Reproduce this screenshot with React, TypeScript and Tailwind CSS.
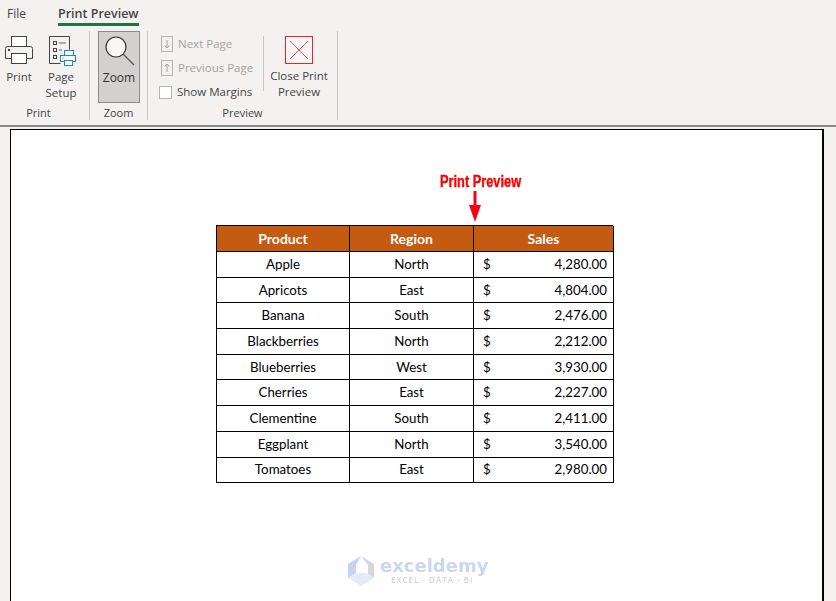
import type { ReactNode } from 'react';

const rows = [
  ['Apple', 'North', '4,280.00'],
  ['Apricots', 'East', '4,804.00'],
  ['Banana', 'South', '2,476.00'],
  ['Blackberries', 'North', '2,212.00'],
  ['Blueberries', 'West', '3,930.00'],
  ['Cherries', 'East', '2,227.00'],
  ['Clementine', 'South', '2,411.00'],
  ['Eggplant', 'North', '3,540.00'],
  ['Tomatoes', 'East', '2,980.00'],
];

function PrintIcon() {
  return (
    <svg width="28" height="28" viewBox="0 0 28 28" fill="none" stroke="#444">
      <rect x="6.5" y="0.5" width="15" height="12" fill="#fff" />
      <path d="M2.5 10.5h23a2 2 0 0 1 2 2v10h-27v-10a2 2 0 0 1 2-2z" fill="#f3f2f1" />
      <rect x="6.5" y="17.5" width="15" height="10" fill="#fff" />
      <rect x="3" y="13" width="2" height="2" fill="#444" stroke="none" />
    </svg>
  );
}

function PageSetupIcon() {
  return (
    <svg width="28" height="30" viewBox="0 0 28 30" fill="none">
      <path d="M.5.5h20v13M.5.5v27h11" stroke="#444" />
      <rect x="4.5" y="5.5" width="3" height="3" stroke="#444" />
      <rect x="4.5" y="12.5" width="3" height="3" stroke="#444" />
      <rect x="4.5" y="19.5" width="3" height="3" stroke="#444" />
      <path d="M10 7h7M10 14h3" stroke="#666" />
      <rect x="15.5" y="14.5" width="9" height="6" fill="#fff" stroke="#1b87c9" />
      <rect x="11.5" y="19.5" width="15" height="6" fill="#fff" stroke="#1b87c9" />
      <rect x="15.5" y="24.5" width="8" height="5" fill="#fff" stroke="#1b87c9" />
      <rect x="13.5" y="21.5" width="1" height="1" fill="#1b87c9" />
    </svg>
  );
}

function ZoomIcon() {
  return (
    <svg width="32" height="32" viewBox="0 0 32 32" fill="none">
      <circle cx="13" cy="12" r="10" fill="#f7f7f6" stroke="#333" strokeWidth="1.2" />
      <path d="M20 19l11 11" stroke="#555" strokeWidth="1.2" />
    </svg>
  );
}

function CloseIcon() {
  return (
    <svg width="28" height="28" viewBox="0 0 28 28" fill="none">
      <rect x="0.5" y="0.5" width="27" height="27" fill="#f7f6f5" stroke="#e8232a" />
      <path d="M5 5l18 18M23 5L5 23" stroke="#f0525a" />
    </svg>
  );
}

function PageArrowIcon({ up }: { up?: boolean }) {
  return (
    <svg width="12" height="16" viewBox="0 0 12 16" fill="none">
      <rect x="0.5" y="0.5" width="11" height="15" fill="#f3f2f1" stroke="#b5b4b2" />
      <path d={up ? 'M6 12V4M3.5 6.5L6 4l2.5 2.5' : 'M6 4v8M3.5 9.5L6 12l2.5-2.5'} stroke="#a3a2a0" />
    </svg>
  );
}

function Group({ width, label, labelClass, children }: { width: string; label: string; labelClass?: string; children: ReactNode }) {
  return (
    <div className={`${width} flex h-[89px] shrink-0 flex-col border-r border-[#c8c6c4]`}>
      <div className="flex h-[77px] min-h-0">{children}</div>
      <div className={`flex-1 pt-[4px] text-center text-[11px] leading-[14px] text-[#444] ${labelClass ?? ''}`}>{label}</div>
    </div>
  );
}

function Watermark() {
  return (
    <div className="absolute left-[336px] top-[425px] flex items-start gap-[5px] blur-[0.4px]">
      <svg width="28" height="32" viewBox="0 0 28 32">
        <path d="M14 1L1 9v14l8-5V10z" fill="#c5d4f0" />
        <path d="M14 1l13 8v14l-6-4v-9z" fill="#d4d6d8" />
        <path d="M1 23l8-5h10l8 5-13 8z" fill="#e3ebf7" />
      </svg>
      <div className="mt-[1px] flex flex-col items-start">
        <span className="font-['DejaVu_Sans'] text-[18px] font-bold leading-[20px] text-[#c9d7f2]">exceldemy</span>
        <span className="ml-[11px] font-['Open_Sans'] text-[8px] font-semibold leading-[8px] tracking-[1px] text-[#d3d5d8]">EXCEL - DATA - BI</span>
      </div>
    </div>
  );
}

export default function App() {
  return (
    <div className="flex h-[601px] w-[836px] flex-col overflow-hidden bg-[#f3f2f1] font-['Open_Sans',sans-serif]">
      {/* Tabs */}
      <div className="flex h-[31px] shrink-0 items-start pl-[7px] pt-[5px] text-[12px] leading-[18px] text-[#444]">
        <span>File</span>
        <div className="ml-[32px] flex flex-col">
          <span className="text-[12.5px] font-semibold">Print Preview</span>
          <div className="h-[3px] bg-[#217346]" />
        </div>
      </div>

      {/* Ribbon */}
      <div className="flex h-[96px] shrink-0 items-start border-b-[2px] border-[#8a8a89] text-[11.5px] leading-[16px] text-[#444]">
        <Group width="w-[90px]" label="Print" labelClass="pr-[12px]">
          <div className="flex w-[38px] flex-col items-center pt-[5px]">
            <PrintIcon />
            <span className="mt-[5px]">Print</span>
          </div>
          <div className="flex w-[46px] flex-col items-center pt-[5px]">
            <div className="ml-[4px]">
              <PageSetupIcon />
            </div>
            <span className="mt-[3px] w-[36px] text-center">Page Setup</span>
          </div>
        </Group>
        <Group width="w-[58px]" label="Zoom">
          <div className="ml-[8px] flex h-[72px] w-[42px] flex-col items-center border border-[#8a8a88] bg-[#d2d1cf] pt-[3px]">
            <ZoomIcon />
            <span className="mt-[3px] text-[12px] text-[#333]">Zoom</span>
          </div>
        </Group>
        <Group width="w-[190px]" label="Preview">
          <div className="mb-[11px] mt-[5px] flex w-[116px] flex-col gap-[8px] border-r border-[#c8c6c4] pl-[11px]">
            <div className="flex h-[16px] items-center gap-[5px] pl-[2px] text-[#a5a4a2]">
              <PageArrowIcon />
              <span>Next Page</span>
            </div>
            <div className="flex h-[16px] items-center gap-[5px] pl-[2px] text-[#a5a4a2]">
              <PageArrowIcon up />
              <span>Previous Page</span>
            </div>
            <div className="flex h-[16px] items-center gap-[5px]">
              <div className="h-[13px] w-[13px] border border-[#b5b4b2] bg-white" />
              <span>Show Margins</span>
            </div>
          </div>
          <div className="flex w-[70px] flex-col items-center pt-[5px]">
            <CloseIcon />
            <span className="mt-[4px] text-center">Close Print Preview</span>
          </div>
        </Group>
      </div>

      {/* Page */}
      <div className="relative ml-[10px] mt-[2px] flex h-full w-[814px] flex-col items-start border-l border-r-[2px] border-t border-black bg-white pl-[205px] pt-[43px]">
        <div className="ml-[224px] w-fit origin-left scale-x-[0.8] whitespace-nowrap font-['Liberation_Sans',sans-serif] text-[16px] font-bold leading-[18px] text-[#ff0000] [-webkit-text-stroke:0.4px_#ff0000]">
          Print Preview
        </div>
        <div className="ml-[253px] flex h-[34px] flex-col items-center">
          <svg width="12" height="32" viewBox="0 0 12 32">
            <path d="M4.5 0h3v14H12L6 31 0 14h4.5z" fill="#fb0012" />
          </svg>
        </div>

        <div className="grid w-[397px] grid-cols-[133px_124px_140px] border-l border-t border-black font-['Lato',sans-serif] text-[13.3px] text-black">
          {['Product', 'Region', 'Sales'].map((h) => (
            <div key={h} className="flex h-[26px] items-center justify-center border-b border-r border-black bg-[#c55a11] text-[14px] font-bold text-white">
              {h}
            </div>
          ))}
          {rows.map(([product, region, sales]) => (
            <div key={product} className="contents">
              <div className="flex h-[25.7px] items-center justify-center border-b border-r border-black pt-[1px]">{product}</div>
              <div className="flex h-[25.7px] items-center justify-center border-b border-r border-black pt-[1px]">{region}</div>
              <div className="flex h-[25.7px] items-center justify-between border-b border-r border-black pl-[9px] pr-[6px] pt-[1px]">
                <span>$</span>
                <span>{sales}</span>
              </div>
            </div>
          ))}
        </div>
        <Watermark />
      </div>
    </div>
  );
}
